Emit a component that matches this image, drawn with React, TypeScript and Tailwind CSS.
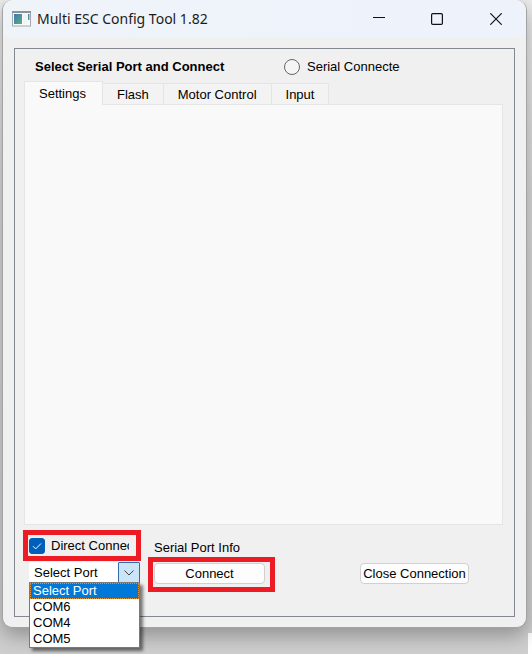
import { useState } from 'react';

const tabs = ['Settings', 'Flash', 'Motor Control', 'Input'];
const ports = ['Select Port', 'COM6', 'COM4', 'COM5'];

function AppIcon() {
  return (
    <svg width="19" height="16" viewBox="0 0 19 16" aria-hidden="true">
      <defs>
        <linearGradient id="screen" x1="0" y1="0" x2="1" y2="1">
          <stop offset="0" stopColor="#3f78b5" />
          <stop offset="1" stopColor="#55b07c" />
        </linearGradient>
      </defs>
      <rect x="0.5" y="0.5" width="18" height="14.5" fill="#fafafa" stroke="#a4a8ad" />
      <path d="M0 1h19" stroke="#8d9197" strokeWidth="2" />
      <rect x="2" y="3" width="8" height="10" fill="url(#screen)" />
      <rect x="11" y="3" width="4" height="10" fill="#f1f4f4" />
      <rect x="16" y="3" width="1.5" height="6" fill="url(#screen)" />
    </svg>
  );
}

function TitleBar() {
  return (
    <header className="flex h-[37px] shrink-0 items-center bg-linear-to-r from-[#eff4f9] to-[#eef2fb] pl-[9px]">
      <AppIcon />
      <h1 className="ml-[6px] flex-1 whitespace-nowrap font-['Noto_Sans',sans-serif] text-[14px] leading-5 text-[#1b1b1b]">
        Multi ESC Config Tool 1.82
      </h1>
      <div className="flex">
        <button type="button" aria-label="Minimize" className="flex h-8 w-[58px] items-center justify-center">
          <svg width="12" height="12" viewBox="0 0 12 12" stroke="#111" fill="none">
            <path d="M0 4.5h12" />
          </svg>
        </button>
        <button type="button" aria-label="Maximize" className="flex h-8 w-[58px] items-center justify-center">
          <svg width="12" height="12" viewBox="0 0 12 12" stroke="#111" strokeWidth="1.2" fill="none">
            <rect x="0.6" y="0.6" width="10.8" height="10.8" rx="1.2" />
          </svg>
        </button>
        <button type="button" aria-label="Close" className="flex h-8 w-[60px] items-center justify-center">
          <svg width="12" height="12" viewBox="0 0 12 12" stroke="#111" strokeWidth="1.2" fill="none">
            <path d="M0.3 0.3l11.4 11.4M11.7 0.3L0.3 11.7" />
          </svg>
        </button>
      </div>
    </header>
  );
}

function PortSelect() {
  const [port, setPort] = useState(ports[0]);
  const [open, setOpen] = useState(true);

  const choose = (value: string) => {
    setPort(value);
    setOpen(false);
  };

  return (
    <div className="relative ml-[6px] mt-px flex h-[21px] w-[111px]">
      <select
        aria-label="Serial port"
        value={port}
        onChange={(e) => choose(e.target.value)}
        className="w-full appearance-none bg-white pl-[5px] text-[13px] leading-5 text-black outline-none"
      >
        {ports.map((p) => (
          <option key={p}>{p}</option>
        ))}
      </select>
      <button
        type="button"
        aria-label="Show ports"
        onClick={() => setOpen(!open)}
        className="absolute inset-y-0 right-0 flex w-[22px] items-center justify-center rounded-[1px] border border-[#2f6fae] bg-[#cce4f7]"
      >
        <svg width="10" height="6" viewBox="0 0 10 6" fill="none" stroke="#444">
          <path d="M0.5 0.5L5 5L9.5 0.5" />
        </svg>
      </button>
      {open && (
        <ul
          role="listbox"
          aria-label="Ports"
          className="absolute left-0 top-5 z-10 w-full border border-[#7a7a7a] bg-white text-[13px] leading-4 shadow-[3px_3px_3px_rgba(0,0,0,0.5)]"
        >
          {ports.map((p) => (
            <li
              key={p}
              role="option"
              aria-selected={p === port}
              onClick={() => choose(p)}
              className={
                p === port
                  ? 'h-4 bg-[#0078d7] pl-[3px] text-white outline-1 -outline-offset-1 outline-dotted outline-[#e8933a]'
                  : 'h-4 pl-[3px] text-black'
              }
            >
              {p}
            </li>
          ))}
        </ul>
      )}
    </div>
  );
}

export default function App() {
  const [activeTab, setActiveTab] = useState('Settings');
  const [direct, setDirect] = useState(true);

  return (
    <div className="relative flex min-h-screen flex-col bg-linear-to-b from-[#ececec] via-[#d8d8d8] via-30% to-[#cfcfcf] pb-[26px] pl-[2px] pr-[5px] font-['Liberation_Sans',Arial,sans-serif] text-[13px] text-black">
      <span className="absolute bottom-0 right-0 h-[21px] w-1 bg-white" />
      <div className="relative flex flex-1 flex-col rounded-[10px] border border-t-0 border-[#a3a3a3] bg-[#f0f0f0] shadow-[0_8px_20px_rgba(0,0,0,0.3)]">
        <div className="overflow-hidden rounded-t-[10px]">
          <TitleBar />
        </div>
        <main className="mx-[11px] mb-[10px] mt-[11px] flex flex-1 flex-col border border-[#828790] pb-6">
          <div className="flex h-8 items-center pl-5 pt-[3px]">
            <h2 className="w-[249px] whitespace-nowrap font-bold leading-4">
              Select Serial Port and Connect
            </h2>
            <label className="flex items-center gap-[7px]">
              <input
                type="radio"
                name="status"
                className="size-4 appearance-none rounded-full border border-[#666] bg-[#f5f5f5] checked:border-4 checked:border-[#005fb8]"
              />
              <span className="w-[93px] overflow-hidden whitespace-nowrap leading-[18px]">Serial Connected</span>
            </label>
          </div>

          <div role="tablist" className="ml-[9px] flex items-end">
            {tabs.map((tab) => (
              <button
                key={tab}
                type="button"
                role="tab"
                aria-selected={tab === activeTab}
                onClick={() => setActiveTab(tab)}
                className={
                  tab === activeTab
                    ? 'relative -mb-px h-6 border border-b-0 border-[#e5e5e5] bg-[#f9f9f9] pl-[14px] pr-4 leading-4'
                    : 'h-[21px] border border-b-0 border-l-0 border-[#e5e5e5] bg-[#f3f3f3] px-[14px] pt-px leading-4'
                }
              >
                {tab}
              </button>
            ))}
          </div>
          <section
            role="tabpanel"
            aria-label={activeTab}
            className="ml-[9px] mr-[11px] min-h-40 flex-1 border border-[#e5e5e5] bg-[#f9f9f9]"
          />

          <div className="mt-[5px] flex h-[62px] items-start pl-2">
            <div>
              <div className="flex h-[31px] w-[118px] items-center border-5 border-[#ed1c24] pl-px">
                <label className="flex items-center gap-[6px]">
                  <span className="relative flex size-4">
                    <input
                      type="checkbox"
                      checked={direct}
                      onChange={(e) => setDirect(e.target.checked)}
                      className="size-4 appearance-none rounded-[3px] border border-[#005fb8] bg-white checked:bg-[#005fb8]"
                    />
                    <svg
                      className="pointer-events-none absolute inset-0"
                      width="16"
                      height="16"
                      viewBox="0 0 16 16"
                      fill="none"
                      stroke="#fff"
                    >
                      <path d="M4 8.2l2.7 2.7L12 5.5" />
                    </svg>
                  </span>
                  <span className="w-[78px] overflow-hidden whitespace-nowrap leading-[18px]">
                    Direct Connect
                  </span>
                </label>
              </div>
              <PortSelect />
            </div>
            <div className="ml-[7px] mt-[9px]">
              <p className="pl-[6px] leading-[18px]">Serial Port Info</p>
              <div className="flex h-[35px] w-[127px] border-5 border-[#ed1c24] pb-[3px] pl-px pr-[5px] pt-px">
                <button
                  type="button"
                  className="flex-1 rounded-[4px] border border-[#d0d0d0] bg-[#fdfdfd] pt-px leading-4"
                >
                  Connect
                </button>
              </div>
            </div>
            <button
              type="button"
              className="ml-auto mr-[45px] mt-[33px] h-[21px] w-[109px] whitespace-nowrap rounded-[4px] border border-[#d0d0d0] bg-[#fdfdfd] pt-px leading-4"
            >
              Close Connection
            </button>
          </div>
        </main>
      </div>
    </div>
  );
}
